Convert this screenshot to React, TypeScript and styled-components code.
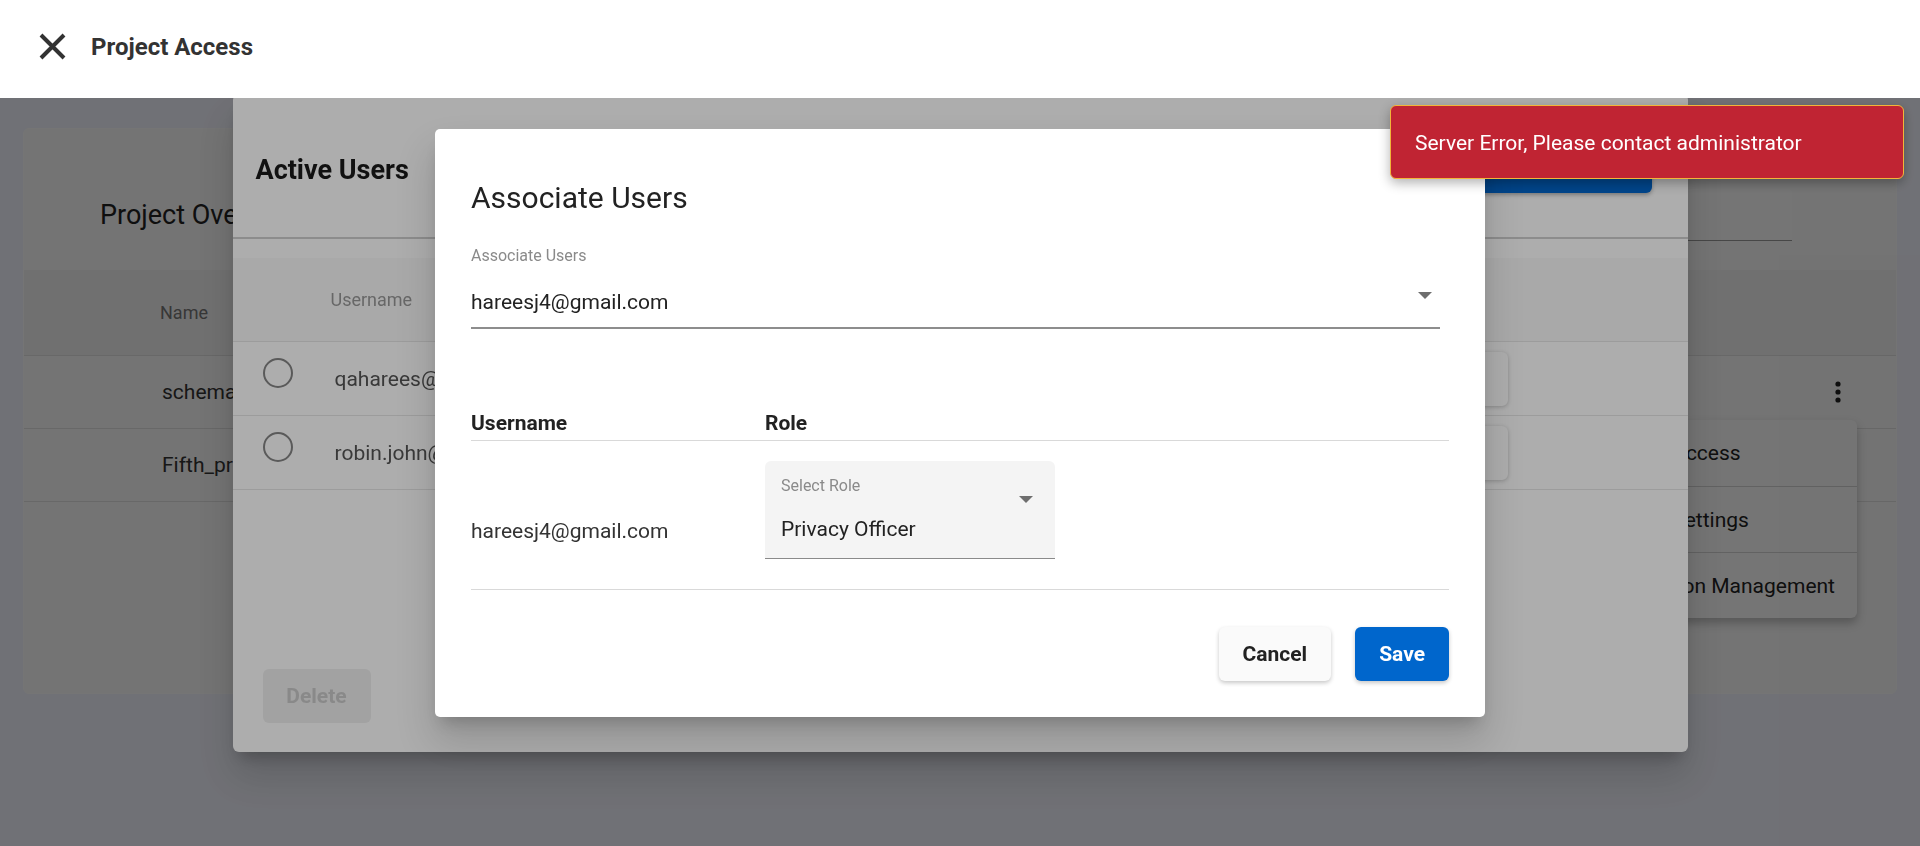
import React from "react";
import styled, { createGlobalStyle } from "styled-components";

const GlobalStyle = createGlobalStyle`
  html, body { margin: 0; padding: 0; }
  body {
    background: #f3f5fe;
    font-family: Roboto, "Noto Sans", Arial, sans-serif;
    overflow: hidden;
    color: #212121;
  }
  * { box-sizing: border-box; }
`;

/* ---------- top bar ---------- */
const TopBar = styled.header`
  position: relative;
  z-index: 2000;
  height: 98px;
  background: #fff;
  display: flex;
  align-items: center;
  gap: 25px;
  padding: 0 0 5px 39px;
`;
const CloseIcon = styled.svg`
  width: 27px;
  height: 27px;
  flex: none;
`;
const TopTitle = styled.h1`
  margin: 0;
  font-size: 24px;
  font-weight: 700;
  color: #333;
`;

/* ---------- page behind ---------- */
const Main = styled.main`
  padding: 30px 23px;
`;
const Card = styled.section`
  position: relative;
  height: 566px;
  background: #fafafa;
  border: 1px solid #fdfdfd;
  border-radius: 6px;
  display: flex;
  flex-direction: column;
`;
const CardHeader = styled.div`
  height: 141px;
  display: flex;
  align-items: center;
  justify-content: space-between;
  padding: 60px 104px 29px 76px;
`;
const CardTitle = styled.h2`
  margin: 0;
  font-size: 27px;
  font-weight: 400;
  color: #222;
`;
const SearchField = styled.div`
  width: 280px;
  height: 52px;
  background: #fdfdfd;
  border-bottom: 1px solid #999;
  border-radius: 4px 4px 0 0;
`;
const CardHeadRow = styled.div`
  height: 86px;
  background: #f3f3f3;
  border-bottom: 1px solid #e0e0e0;
  display: flex;
  align-items: center;
  padding-left: 136px;
  font-size: 18px;
  color: #777;
`;
const CardRow = styled.div`
  height: 73px;
  border-bottom: 1px solid #e0e0e0;
  display: flex;
  align-items: center;
  justify-content: space-between;
  padding: 0 52px 0 138px;
  font-size: 21px;
  color: #333;
`;
const Dots = styled.svg`
  width: 12px;
  height: 26px;
  margin-top: 4px;
`;
const Menu = styled.ul`
  position: absolute;
  top: 291px;
  right: 39px;
  margin: 0;
  padding: 0;
  list-style: none;
  background: #fdfdfd;
  border-radius: 6px;
  box-shadow: 0 5px 10px rgba(0, 0, 0, 0.25);
`;
const MenuItem = styled.li`
  height: 66px;
  display: flex;
  align-items: center;
  padding: 0 22px 0 34px;
  font-size: 21px;
  color: #222;
  & + & {
    border-top: 1px solid #d4d4d4;
  }
`;

/* ---------- overlays ---------- */
const Backdrop = styled.div<{ $z: number }>`
  position: fixed;
  inset: 0;
  z-index: ${(p) => p.$z};
  background: rgba(0, 0, 0, 0.32);
  display: flex;
  align-items: center;
  justify-content: center;
`;

/* Active users dialog */
const UsersDialog = styled.div`
  width: 1455px;
  height: 658px;
  background: #fff;
  border-radius: 6px;
  display: flex;
  flex-direction: column;
  box-shadow: 0 11px 15px -7px rgba(0, 0, 0, 0.25),
    0 24px 38px 3px rgba(0, 0, 0, 0.14);
`;
const UsersHeader = styled.div`
  height: 145px;
  display: flex;
  align-items: center;
  justify-content: space-between;
  padding: 51px 36px 42px 23px;
  border-bottom: 2px solid #cfcfcf;
`;
const UsersTitle = styled.h2`
  margin: 0;
  font-size: 27px;
  font-weight: 700;
  color: #1a1a1a;
`;
const PrimaryWide = styled.button`
  width: 200px;
  height: 50px;
  margin-top: -5px;
  border: none;
  border-radius: 6px;
  background: #0066cc;
  color: #fff;
  font: 700 21px Roboto, sans-serif;
  box-shadow: 0 2px 4px rgba(0, 0, 0, 0.3);
`;
const UsersTable = styled.div`
  margin-top: 19px;
`;
const UsersHeadRow = styled.div`
  height: 84px;
  background: #fafafa;
  border-bottom: 1px solid #e6e6e6;
  display: grid;
  grid-template-columns: 98px 1fr;
  align-items: center;
  font-size: 18px;
  color: #999;
`;
const UsersRow = styled.div`
  height: 74px;
  border-bottom: 1px solid #e6e6e6;
  display: grid;
  grid-template-columns: 98px 1fr 240px 180px;
  align-items: center;
  font-size: 21px;
  color: #555;
`;
const RadioCell = styled.div`
  padding-left: 30px;
  margin-bottom: 12px;
`;
const Radio = styled.span`
  display: block;
  width: 30px;
  height: 30px;
  border-radius: 50%;
  border: 2.5px solid #858585;
`;
const UserCell = styled.div`
  padding-left: 4px;
`;
const RoleBox = styled.div`
  height: 54px;
  background: #fff;
  border-radius: 6px;
  box-shadow: 0 1px 4px rgba(0, 0, 0, 0.22);
`;
const UsersFooter = styled.div`
  margin-top: auto;
  padding: 0 0 29px 30px;
`;
const DisabledButton = styled.button`
  width: 108px;
  height: 54px;
  border: none;
  border-radius: 6px;
  background: #efefef;
  color: #cbcbcb;
  font: 700 21px Roboto, sans-serif;
`;

/* Associate users dialog */
const AssocDialog = styled.div`
  width: 1050px;
  height: 588px;
  background: #fff;
  border-radius: 5px;
  padding: 51px 36px 36px;
  display: flex;
  flex-direction: column;
  box-shadow: 0 11px 15px -7px rgba(0, 0, 0, 0.2),
    0 24px 38px 3px rgba(0, 0, 0, 0.14);
`;
const AssocTitle = styled.h2`
  margin: 0;
  font-size: 30px;
  line-height: 36px;
  font-weight: 400;
  color: #222;
`;
const SelectField = styled.div`
  position: relative;
  margin: 30px 9px 0 0;
  border-bottom: 2px solid #8d8d8d;
  padding-bottom: 12px;
`;
const FieldLabel = styled.div`
  font-size: 16px;
  line-height: 19px;
  color: #8a8a8a;
`;
const FieldValue = styled.div`
  margin-top: 25px;
  font-size: 21px;
  line-height: 25px;
  color: #222;
`;
const Caret = styled.span<{ $right: number; $top: number }>`
  position: absolute;
  right: ${(p) => p.$right}px;
  top: ${(p) => p.$top}px;
  width: 0;
  height: 0;
  border-left: 7px solid transparent;
  border-right: 7px solid transparent;
  border-top: 7px solid #6e6e6e;
`;
const RolesTable = styled.div`
  margin-top: 82px;
`;
const RolesHead = styled.div`
  display: grid;
  grid-template-columns: 294px 1fr;
  padding-bottom: 4px;
  border-bottom: 1px solid #d9d9d9;
  font-size: 21px;
  line-height: 25px;
  font-weight: 700;
  color: #222;
`;
const RolesRow = styled.div`
  display: grid;
  grid-template-columns: 294px 290px;
  padding: 20px 0 30px;
  border-bottom: 1px solid #d9d9d9;
`;
const RolesUser = styled.div`
  align-self: end;
  padding-bottom: 15px;
  font-size: 21px;
  line-height: 25px;
  color: #333;
`;
const FilledSelect = styled.div`
  position: relative;
  height: 98px;
  background: #f4f4f4;
  border-radius: 6px 6px 0 0;
  border-bottom: 1.5px solid #8a8a8a;
  padding: 15px 16px 0;
`;
const FilledValue = styled.div`
  margin-top: 22px;
  font-size: 21px;
  line-height: 25px;
  color: #222;
`;
const Actions = styled.div`
  margin-top: 37px;
  display: flex;
  justify-content: flex-end;
  gap: 24px;
`;
const Button = styled.button<{ $primary?: boolean }>`
  height: 54px;
  padding: 0 24px;
  border: none;
  border-radius: 6px;
  font: 700 21px Roboto, sans-serif;
  background: ${(p) => (p.$primary ? "#0066cc" : "#fafafa")};
  color: ${(p) => (p.$primary ? "#fff" : "#222")};
  box-shadow: 0 2px 4px rgba(0, 0, 0, 0.22);
`;

/* toast */
const Toast = styled.div`
  position: fixed;
  top: 105px;
  right: 16px;
  z-index: 1500;
  width: 514px;
  height: 74px;
  display: flex;
  align-items: center;
  padding: 2px 24px 0;
  background: #c02433;
  border: 1px solid #f2b53a;
  border-radius: 6px;
  color: #fff;
  font-size: 21px;
  box-shadow: 0 4px 12px rgba(0, 0, 0, 0.3);
`;

export default function App() {
  return (
    <>
      <GlobalStyle />
      <TopBar>
        <CloseIcon viewBox="0 0 27 27">
          <path d="M2 2 L25 25 M25 2 L2 25" stroke="#333" strokeWidth="4" fill="none" />
        </CloseIcon>
        <TopTitle>Project Access</TopTitle>
      </TopBar>

      <Main>
        <Card>
          <CardHeader>
            <CardTitle>Project Overview</CardTitle>
            <SearchField />
          </CardHeader>
          <CardHeadRow>Name</CardHeadRow>
          <CardRow>
            <span>schema_project</span>
            <Dots viewBox="0 0 12 26">
              <circle cx="6" cy="3" r="2.6" fill="#222" />
              <circle cx="6" cy="11" r="2.6" fill="#222" />
              <circle cx="6" cy="19" r="2.6" fill="#222" />
            </Dots>
          </CardRow>
          <CardRow>
            <span>Fifth_project</span>
          </CardRow>
          <Menu>
            <MenuItem>Project Access</MenuItem>
            <MenuItem>Project Settings</MenuItem>
            <MenuItem>Permission Management</MenuItem>
          </Menu>
        </Card>
      </Main>

      <Backdrop $z={1300}>
        <UsersDialog>
          <UsersHeader>
            <UsersTitle>Active Users</UsersTitle>
            <PrimaryWide>Associate Users</PrimaryWide>
          </UsersHeader>
          <UsersTable>
            <UsersHeadRow>
              <span />
              <span>Username</span>
            </UsersHeadRow>
            <UsersRow>
              <RadioCell><Radio /></RadioCell>
              <UserCell>qaharees@gmail.com</UserCell>
              <RoleBox />
              <span />
            </UsersRow>
            <UsersRow>
              <RadioCell><Radio /></RadioCell>
              <UserCell>robin.john@gmail.com</UserCell>
              <RoleBox />
              <span />
            </UsersRow>
          </UsersTable>
          <UsersFooter>
            <DisabledButton disabled>Delete</DisabledButton>
          </UsersFooter>
        </UsersDialog>
      </Backdrop>

      <Backdrop $z={1400}>
        <AssocDialog>
          <AssocTitle>Associate Users</AssocTitle>
          <SelectField>
            <FieldLabel>Associate Users</FieldLabel>
            <FieldValue>hareesj4@gmail.com</FieldValue>
            <Caret $right={8} $top={46} />
          </SelectField>
          <RolesTable>
            <RolesHead>
              <span>Username</span>
              <span>Role</span>
            </RolesHead>
            <RolesRow>
              <RolesUser>hareesj4@gmail.com</RolesUser>
              <FilledSelect>
                <FieldLabel>Select Role</FieldLabel>
                <FilledValue>Privacy Officer</FilledValue>
                <Caret $right={22} $top={35} />
              </FilledSelect>
            </RolesRow>
          </RolesTable>
          <Actions>
            <Button>Cancel</Button>
            <Button $primary>Save</Button>
          </Actions>
        </AssocDialog>
      </Backdrop>

      <Toast>Server Error, Please contact administrator</Toast>
    </>
  );
}
